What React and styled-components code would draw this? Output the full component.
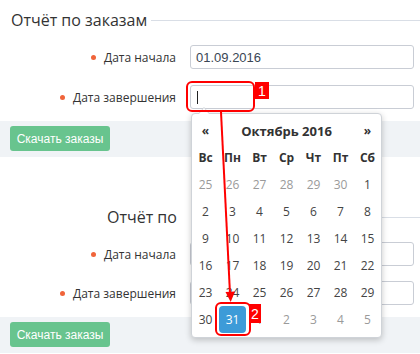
import React from "react";
import styled, { createGlobalStyle } from "styled-components";

const Global = createGlobalStyle`
  html, body { margin: 0; padding: 0; background: #fff; }
  body { font-family: "Open Sans", "DejaVu Sans", sans-serif; }
`;

const Page = styled.div`
  position: relative;
  width: 420px;
  height: 354px;
  overflow: hidden;
  background: #fff;
`;

const Section = styled.section`
  padding-top: ${(p) => p.$top}px;
`;

const Legend = styled.div`
  display: flex;
  align-items: center;
  height: 40px;
  padding-left: ${(p) => p.$indent}px;
`;

const LegendText = styled.span`
  font-size: 16px;
  line-height: 1;
  color: #333;
`;

const LegendLine = styled.div`
  flex: 1;
  height: 1px;
  margin-left: ${(p) => p.$gap}px;
  background: #d9dee6;
`;

const Rows = styled.div`
  display: flex;
  flex-direction: column;
  gap: ${(p) => p.$gap}px;
  padding: 5px 6px 12px 0;
`;

const Row = styled.div`
  display: flex;
  align-items: center;
  height: 24px;
`;

const Label = styled.label`
  width: 176px;
  margin-right: 14px;
  display: flex;
  justify-content: flex-end;
  align-items: center;
  font-size: 12px;
  color: #333;
`;

const Dot = styled.span`
  width: 5px;
  height: 5px;
  border-radius: 50%;
  background: #f0643a;
  margin-right: 8px;
`;

const Field = styled.div`
  flex: 1;
  height: 24px;
  box-sizing: border-box;
  border: 1px solid #c9cdd5;
  border-radius: 3px;
  padding: 0 5px;
  display: flex;
  align-items: center;
  font-family: "Liberation Sans", Arial, sans-serif;
  font-size: 13px;
  color: #3a4654;
`;

const Caret = styled.span`
  width: 1px;
  height: 13px;
  background: #222;
  margin-left: 1px;
`;

const Footer = styled.div`
  height: 36px;
  box-sizing: border-box;
  padding: 5px 10px;
  background: #f0f3f6;
  display: flex;
  align-items: flex-start;
`;

const Button = styled.button`
  width: 100px;
  height: 25px;
  border: none;
  border-radius: 3px;
  background: #68c48e;
  color: #fff;
  font-family: "Liberation Sans", Arial, sans-serif;
  font-size: 12px;
  padding: 0;
  cursor: pointer;
`;

const Popup = styled.div`
  position: absolute;
  left: 191px;
  top: 113px;
  width: 191px;
  box-sizing: border-box;
  padding: 3px 0 4px;
  background: #fff;
  border: 1px solid #cfd3d8;
  border-radius: 4px;
  box-shadow: 0 2px 6px rgba(0, 0, 0, 0.22);
  display: grid;
  grid-template-columns: repeat(7, 27px);
  grid-auto-rows: 27px;

  &::before,
  &::after {
    content: "";
    position: absolute;
    left: 6px;
    border-left: 6px solid transparent;
    border-right: 6px solid transparent;
  }
  &::before {
    top: -7px;
    border-bottom: 7px solid #cfd3d8;
  }
  &::after {
    top: -6px;
    left: 7px;
    border-left-width: 5px;
    border-right-width: 5px;
    border-bottom: 6px solid #fff;
  }
`;

const Cell = styled.div`
  display: flex;
  align-items: center;
  justify-content: center;
  font-size: 12px;
  color: ${(p) => (p.$muted ? "#9a9a9a" : "#444")};
  ${(p) => (p.$bold ? "font-weight: 700; color: #333;" : "")}
  ${(p) =>
    p.$active
      ? "background: #3d9bd8; color: #fff; border-radius: 4px;"
      : ""}
`;

const Title = styled(Cell)`
  grid-column: span 5;
  font-size: 13px;
  font-weight: 700;
  color: #333;
`;

const Mark = styled.div`
  position: absolute;
  left: ${(p) => p.$x}px;
  top: ${(p) => p.$y}px;
  width: ${(p) => p.$w}px;
  height: ${(p) => p.$h}px;
  box-sizing: border-box;
  border: 2px solid #f00;
  border-radius: 6px;
`;

const Badge = styled.div`
  position: absolute;
  left: ${(p) => p.$x}px;
  top: ${(p) => p.$y}px;
  width: ${(p) => p.$w}px;
  height: ${(p) => p.$h}px;
  background: #f00;
  color: #fff;
  font-family: "Liberation Sans", Arial, sans-serif;
  font-size: 14px;
  display: flex;
  align-items: center;
  justify-content: center;
`;

const Overlay = styled.svg`
  position: absolute;
  left: 0;
  top: 0;
  pointer-events: none;
`;

const weekdays = ["Вс", "Пн", "Вт", "Ср", "Чт", "Пт", "Сб"];
const days = [
  ...[25, 26, 27, 28, 29, 30].map((d) => ({ d, m: true })),
  ...Array.from({ length: 31 }, (_, i) => ({ d: i + 1 })),
  ...[1, 2, 3, 4, 5].map((d) => ({ d, m: true })),
];

function Form({ top, indent, gap, title, lineGap, filled }) {
  return (
    <Section $top={top}>
      <Legend $indent={indent}>
        <LegendText>{title}</LegendText>
        <LegendLine $gap={lineGap} />
      </Legend>
      <Rows $gap={gap}>
        <Row>
          <Label>
            <Dot />
            Дата начала
          </Label>
          <Field>{filled ? "01.09.2016" : ""}</Field>
        </Row>
        <Row>
          <Label>
            <Dot />
            Дата завершения
          </Label>
          <Field>{filled ? <Caret /> : ""}</Field>
        </Row>
      </Rows>
      <Footer>
        <Button>Скачать заказы</Button>
      </Footer>
    </Section>
  );
}

export default function App() {
  return (
    <Page>
      <Global />
      <Form top={0} indent={11} gap={16} title="Отчёт по заказам" lineGap={4} filled />
      <Form top={40} indent={107} gap={15} title="Отчёт по" lineGap={16} />
      <Popup>
        <Cell $bold>«</Cell>
        <Title>Октябрь 2016</Title>
        <Cell $bold>»</Cell>
        {weekdays.map((w) => (
          <Cell key={w} $bold>
            {w}
          </Cell>
        ))}
        {days.map((x, i) => (
          <Cell key={i} $muted={x.m} $active={!x.m && x.d === 31}>
            {x.d}
          </Cell>
        ))}
      </Popup>
      <Mark $x={186} $y={81} $w={69} $h={31} />
      <Badge $x={255} $y={82} $w={14} $h={17}>1</Badge>
      <Mark $x={215} $y={302} $w={36} $h={34} />
      <Badge $x={249} $y={304} $w={12} $h={19}>2</Badge>
      <Overlay width="420" height="354">
        <line x1="221" y1="112" x2="230" y2="294" stroke="#f00" strokeWidth="2" />
        <polygon points="225.5,292 235,291.5 230.7,302" fill="#f00" />
      </Overlay>
    </Page>
  );
}
